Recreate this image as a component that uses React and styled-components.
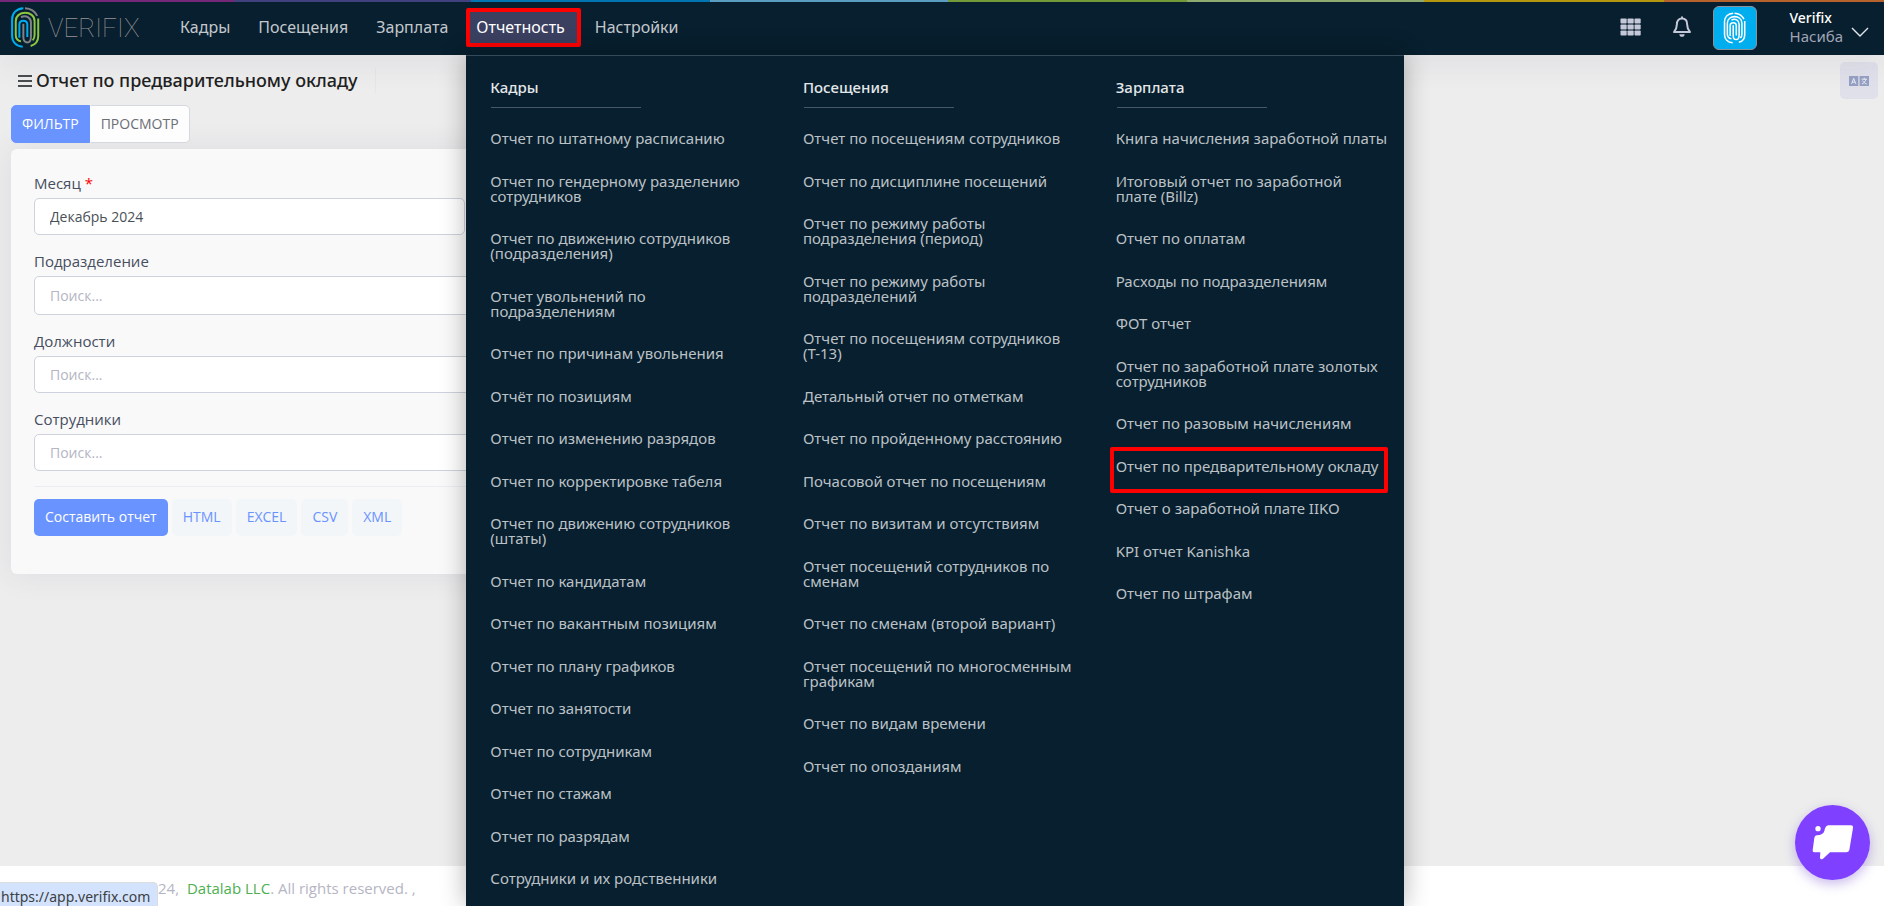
import React, { useState } from 'react';
import styled, { createGlobalStyle } from 'styled-components';

const GlobalStyle = createGlobalStyle`
  *, *::before, *::after {
    box-sizing: border-box;
  }

  body {
    margin: 0;
    background: #ededed;
    color: #3f4254;
    font-family: 'Noto Sans', 'Open Sans', sans-serif;
    font-size: 14px;
    overflow: hidden;
  }

  button, input {
    font-family: inherit;
  }

  ul {
    list-style: none;
    margin: 0;
    padding: 0;
  }
`;

const Page = styled.div`
  display: flex;
  flex-direction: column;
  min-height: 100vh;
`;

/* ---------- header ---------- */

const Header = styled.header`
  position: relative;
  z-index: 2;
  display: flex;
  align-items: stretch;
  height: 55px;
  background: #071f2e;
  box-shadow: 0 10px 30px rgba(82, 63, 105, 0.08);
`;

const Stripes = styled.div`
  position: absolute;
  top: 0;
  left: 0;
  right: 0;
  height: 2px;
  background: linear-gradient(
    to right,
    #762777 0 12.4%,
    #41427d 12.4% 25%,
    #0075b2 25% 37.7%,
    #5b9dc0 37.7% 50.3%,
    #739a38 50.3% 63%,
    #8fab70 63% 75.6%,
    #b4960f 75.6% 88.3%,
    #b5622c 88.3%
  );
`;

const Logo = styled.a`
  display: flex;
  align-items: center;
  gap: 8px;
  width: 170px;
  padding-left: 10px;
  color: #9a9396;
  font-family: Roboto, sans-serif;
  font-size: 26px;
  font-weight: 100;
  line-height: 40px;
  text-decoration: none;
`;

const Nav = styled.nav`
  display: flex;
`;

const NavList = styled.ul`
  display: flex;
  gap: 8px;
`;

const NavItem = styled.li`
  position: relative;
  display: flex;
  align-items: flex-start;
  padding-top: 12px;
`;

const NavButton = styled.button`
  position: relative;
  height: 31px;
  padding: 0 ${props => (props.$active ? 12 : 10)}px 0 10px;
  border: 0;
  background: ${props => (props.$active ? '#3b4061' : 'transparent')};
  color: ${props => (props.$active ? '#ffffff' : '#c4c8cd')};
  font-size: 16px;
  line-height: 29px;
  cursor: pointer;

  &::after {
    content: '';
    display: ${props => (props.$active ? 'block' : 'none')};
    position: absolute;
    inset: -4px -4px -4px 0;
    border: 4px solid #ff0000;
    border-radius: 2px;
  }
`;

const UserBar = styled.div`
  display: flex;
  align-items: center;
  margin-left: auto;
  padding-right: 15px;
`;

const IconButton = styled.button`
  display: flex;
  padding: 0 0 2px;
  border: 0;
  background: none;
  color: #c5c8d8;
  margin-right: ${props => props.$space || 0}px;
  cursor: pointer;
`;

const ProfileButton = styled(IconButton)`
  padding: 8px 0 0;
`;

const Avatar = styled.div`
  display: flex;
  align-items: center;
  justify-content: center;
  width: 44px;
  height: 44px;
  margin-right: 33px;
  border: 1px solid #8a939c;
  border-radius: 6px;
  background: #00aeef;
`;

const UserName = styled.div`
  display: flex;
  flex-direction: column;
  margin-right: 8px;
  padding-bottom: 2px;
  color: #a1a4b5;
  font-size: 15px;
  line-height: 19px;

  strong {
    color: #ffffff;
    font-size: 14px;
    font-weight: 500;
  }
`;

/* ---------- mega menu ---------- */

const MegaMenu = styled.div`
  position: absolute;
  top: 100%;
  left: 0;
  display: grid;
  grid-template-columns: repeat(3, 1fr);
  width: 938px;
  min-height: calc(100vh - 55px);
  padding-top: 20px;
  border-top: 1px solid #34495a;
  background: #071f2e;
  box-shadow: 0 0 24px rgba(0, 0, 0, 0.3);
`;

const MenuColumn = styled.section`
  padding: 0 12px 0 24px;
`;

const MenuTitle = styled.h3`
  margin: 0;
  color: #e4e7ea;
  font-size: 15px;
  font-weight: 500;
  line-height: 22px;

  &::after {
    content: '';
    display: block;
    width: 150px;
    height: 1px;
    margin: 9px 0 9px 1px;
    background: #44586a;
  }
`;

const MenuItem = styled.li`
  padding: 14px 0 13px;
  font-size: 15px;
  line-height: 15px;

  &:nth-child(odd) {
    padding-bottom: 14px;
  }
`;

const MenuLink = styled.a`
  position: relative;
  display: block;
  color: #bcc1c6;
  text-decoration: none;

  &:hover {
    color: #ffffff;
  }

  &::after {
    content: '';
    display: ${props => (props.$marked ? 'block' : 'none')};
    position: absolute;
    inset: -12px 4px -19px -6px;
    border: 4px solid #ff0000;
    border-radius: 2px;
  }
`;

/* ---------- content ---------- */

const Main = styled.main`
  flex: 1;
  padding: 7px 11px 0;
`;

const TitleRow = styled.div`
  display: flex;
  justify-content: space-between;
  align-items: flex-start;
  height: 43px;
`;

const TitleGroup = styled.div`
  display: flex;
  align-items: center;
  height: 37px;
  padding-left: 7px;
`;

const PageTitle = styled.h1`
  margin: 0 0 0 4px;
  padding-right: 17px;
  border-right: 1px solid #e4e6ea;
  color: #212121;
  font-size: 18px;
  font-weight: 500;
  line-height: 25px;
`;

const LangButton = styled.button`
  display: flex;
  align-items: center;
  justify-content: center;
  width: 38px;
  height: 37px;
  margin-right: -5px;
  padding: 0;
  border: 0;
  border-radius: 5px;
  background: #dfe0ea;
`;

const Tabs = styled.div`
  display: flex;
`;

const Tab = styled.button`
  height: 38px;
  padding: 0 10px 2px;
  border: 1px solid ${props => (props.$active ? '#6993ff' : '#d5d8e0')};
  border-left-color: ${props => (props.$active ? '#6993ff' : 'transparent')};
  border-radius: ${props => (props.$active ? '5px 0 0 5px' : '0 5px 5px 0')};
  background: ${props => (props.$active ? '#6993ff' : '#fdfdfd')};
  color: ${props => (props.$active ? '#ffffff' : '#6c6e76')};
  font-size: 14px;
  font-family: 'Open Sans', sans-serif;
  cursor: pointer;
`;

const Card = styled.form`
  width: 50%;
  margin-top: 6px;
  padding: 23px 23px 38px;
  border-radius: 6px;
  background: #f9f9f9;
  box-shadow: 0 0 30px rgba(82, 63, 105, 0.1);
`;

const Field = styled.div`
  width: ${props => (props.$half ? 'calc(50% - 12px)' : '100%')};
  margin-bottom: 15px;
`;

const Label = styled.label`
  display: block;
  padding-bottom: 4px;
  color: #464e5f;
  font-family: 'Open Sans', sans-serif;
  font-size: 15px;
  line-height: 22px;

  span {
    color: #ff0000;
  }
`;

const Input = styled.input`
  display: block;
  width: 100%;
  height: ${props => (props.$tall ? 39 : 37)}px;
  padding: 0 15px;
  border: 1px solid #cdd2dc;
  border-radius: 5px;
  background: #ffffff;
  color: #495057;
  font-family: 'Open Sans', sans-serif;
  font-size: 14px;
  outline: none;

  &::placeholder {
    color: #b5b5c3;
  }
`;

const Actions = styled.div`
  display: flex;
  gap: 4px;
  padding-top: 12px;
  border-top: 1px solid #ebedf3;
`;

const Button = styled.button`
  height: 37px;
  padding: 0 11px 2px;
  border: 0;
  border-radius: 5px;
  background: ${props => (props.$primary ? '#6993ff' : '#f3f6f9')};
  color: ${props => (props.$primary ? '#ffffff' : '#6993ff')};
  font-family: 'Open Sans', sans-serif;
  font-size: 14px;
  cursor: pointer;
`;

const Footer = styled.footer`
  height: 40px;
  padding: 11px 0 0 158px;
  background: #ffffff;
  color: #b5b5c3;
  font-family: 'Open Sans', sans-serif;
  font-size: 15px;
  line-height: 22px;

  a {
    margin-left: 4px;
    color: #4caf50;
    text-decoration: none;
  }
`;

const StatusBubble = styled.div`
  position: fixed;
  z-index: 3;
  left: 0;
  bottom: 0;
  height: 24px;
  padding: 0 7px 0 1px;
  border-top: 1px solid #dcdcdc;
  border-right: 1px solid #dcdcdc;
  border-radius: 0 5px 0 0;
  background: #d3e3fd;
  color: #3c4043;
  font-size: 14px;
  line-height: 28px;
`;

const ChatButton = styled.button`
  position: fixed;
  z-index: 3;
  right: 14px;
  bottom: 26px;
  width: 75px;
  height: 75px;
  padding: 0;
  border: 0;
  border-radius: 50%;
  background: #7f40ff;
  box-shadow: 0 4px 12px rgba(100, 60, 200, 0.35);
  cursor: pointer;
`;

const menu = [
  {
    title: 'Кадры',
    items: [
      'Отчет по штатному расписанию',
      'Отчет по гендерному разделению сотрудников',
      'Отчет по движению сотрудников (подразделения)',
      'Отчет увольнений по подразделениям',
      'Отчет по причинам увольнения',
      'Отчёт по позициям',
      'Отчет по изменению разрядов',
      'Отчет по корректировке табеля',
      'Отчет по движению сотрудников (штаты)',
      'Отчет по кандидатам',
      'Отчет по вакантным позициям',
      'Отчет по плану графиков',
      'Отчет по занятости',
      'Отчет по сотрудникам',
      'Отчет по стажам',
      'Отчет по разрядам',
      'Сотрудники и их родственники',
    ],
  },
  {
    title: 'Посещения',
    items: [
      'Отчет по посещениям сотрудников',
      'Отчет по дисциплине посещений',
      'Отчет по режиму работы подразделения (период)',
      'Отчет по режиму работы подразделений',
      'Отчет по посещениям сотрудников (T-13)',
      'Детальный отчет по отметкам',
      'Отчет по пройденному расстоянию',
      'Почасовой отчет по посещениям',
      'Отчет по визитам и отсутствиям',
      'Отчет посещений сотрудников по сменам',
      'Отчет по сменам (второй вариант)',
      'Отчет посещений по многосменным графикам',
      'Отчет по видам времени',
      'Отчет по опозданиям',
    ],
  },
  {
    title: 'Зарплата',
    items: [
      'Книга начисления заработной платы',
      'Итоговый отчет по заработной плате\u00a0(Billz)',
      'Отчет по оплатам',
      'Расходы по подразделениям',
      'ФОТ отчет',
      'Отчет по заработной плате золотых сотрудников',
      'Отчет по разовым начислениям',
      'Отчет по предварительному окладу',
      'Отчет о заработной плате IIKO',
      'KPI отчет Kanishka',
      'Отчет по штрафам',
    ],
  },
];

const sections = ['Кадры', 'Посещения', 'Зарплата', 'Отчетность', 'Настройки'];
const formats = ['HTML', 'EXCEL', 'CSV', 'XML'];
const currentReport = 'Отчет по предварительному окладу';

function Fingerprint({ width, height, blue = '#00aeef', green = '#8cc63f', gray = '#808285' }) {
  return (
    <svg width={width} height={height} viewBox="30 19 90 124" fill="none" strokeWidth="6" aria-hidden="true">
      <path d="M70 23C49 24 36 38 36 56V107C36 124 48 138 68 139" stroke={blue} />
      <path d="M75 23C92 24 105 32 112 46" stroke={gray} />
      <path d="M115 54V107C115 122 107 133 92 137" stroke={green} />
      <path d="M63 123C52 121 47 114 47 104V62C47 28 104 28 104 62V104C104 111 102 116 98 120" stroke={green} />
      <path d="M63 50C78 42 93 51 93 66V108C93 133 70 131 70 110V70" stroke={gray} />
      <path d="M58 112V72C58 57 82 57 82 72V110" stroke={blue} />
    </svg>
  );
}

function GridIcon() {
  return (
    <svg width="22" height="18" viewBox="0 0 22 18" fill="currentColor" aria-hidden="true">
      {[0, 6, 12].map(y => [0, 7, 14].map(x => (
        <rect key={`${x}-${y}`} x={x + 0.5} y={y + 0.4} width="6.2" height="5.2" rx="0.8" />
      )))}
    </svg>
  );
}

function BellIcon() {
  return (
    <svg width="20" height="22" viewBox="0 0 20 22" aria-hidden="true">
      <path
        d="M10 2.6C6.6 2.6 4.9 5 4.9 8.2C4.9 12.2 3.9 13.6 2 16H18C16.1 13.6 15.1 12.2 15.1 8.2C15.1 5 13.4 2.6 10 2.6Z"
        fill="none"
        stroke="currentColor"
        strokeWidth="2"
        strokeLinejoin="round"
      />
      <path d="M10 0.5V3" stroke="currentColor" strokeWidth="2" />
      <path d="M7.3 18.2H12.7C12.6 19.8 11.5 20.8 10 20.8C8.5 20.8 7.4 19.8 7.3 18.2Z" fill="currentColor" />
    </svg>
  );
}

function LangIcon() {
  return (
    <svg width="20" height="10" viewBox="0 0 20 10" aria-hidden="true">
      <path d="M0 0H9.3V10H0ZM10.6 0H20V10H10.6Z" fill="#96a0c3" />
      <path
        d="M2.6 7.8L4.7 2.4L6.8 7.8M3.4 6.2H6M12.6 3.2H18M15.3 1.8V3.2M17 3.2C16.5 5.4 15 7 12.9 8M13.7 4.6C14.4 6.2 15.9 7.4 17.7 8"
        fill="none"
        stroke="#eceef6"
        strokeWidth="1"
      />
    </svg>
  );
}

export default function App() {
  const [tab, setTab] = useState('filter');
  const [month, setMonth] = useState('Декабрь 2024');

  return (
    <Page>
      <GlobalStyle />
      <Header>
        <Stripes />
        <Logo href="#">
          <Fingerprint width={30} height={41} />
          VERIFIX
        </Logo>
        <Nav>
          <NavList>
            {sections.map(name => (
              <NavItem key={name}>
                <NavButton type="button" $active={name === 'Отчетность'}>{name}</NavButton>
                {name === 'Отчетность' && (
                  <MegaMenu>
                    {menu.map(column => (
                      <MenuColumn key={column.title}>
                        <MenuTitle>{column.title}</MenuTitle>
                        <ul>
                          {column.items.map(item => (
                            <MenuItem key={item}>
                              <MenuLink href="#" $marked={item === currentReport}>{item}</MenuLink>
                            </MenuItem>
                          ))}
                        </ul>
                      </MenuColumn>
                    ))}
                  </MegaMenu>
                )}
              </NavItem>
            ))}
          </NavList>
        </Nav>
        <UserBar>
          <IconButton type="button" aria-label="Приложения" $space={30}>
            <GridIcon />
          </IconButton>
          <IconButton type="button" aria-label="Уведомления" $space={21}>
            <BellIcon />
          </IconButton>
          <Avatar>
            <Fingerprint width={23} height={32} blue="#ffffff" green="#ffffff" gray="#ffffff" />
          </Avatar>
          <UserName>
            <strong>Verifix</strong>
            Насиба
          </UserName>
          <ProfileButton type="button" aria-label="Профиль">
            <svg width="18" height="10" viewBox="0 0 18 10" fill="none" stroke="#e4e6ef" strokeWidth="1.4">
              <path d="M1 1L9 9L17 1" />
            </svg>
          </ProfileButton>
        </UserBar>
      </Header>

      <Main>
        <TitleRow>
          <TitleGroup>
            <svg width="14" height="12" viewBox="0 0 14 12" stroke="#4a4d4f" strokeWidth="2" aria-hidden="true">
              <path d="M0 1H14M0 6H14M0 11H14" />
            </svg>
            <PageTitle>Отчет по предварительному окладу</PageTitle>
          </TitleGroup>
          <LangButton type="button" aria-label="Язык">
            <LangIcon />
          </LangButton>
        </TitleRow>

        <Tabs>
          <Tab type="button" $active={tab === 'filter'} onClick={() => setTab('filter')}>ФИЛЬТР</Tab>
          <Tab type="button" $active={tab === 'view'} onClick={() => setTab('view')}>ПРОСМОТР</Tab>
        </Tabs>

        <Card onSubmit={e => e.preventDefault()}>
          <Field $half>
            <Label htmlFor="month">Месяц <span>*</span></Label>
            <Input id="month" value={month} onChange={e => setMonth(e.target.value)} />
          </Field>
          <Field>
            <Label htmlFor="division">Подразделение</Label>
            <Input id="division" placeholder="Поиск..." $tall />
          </Field>
          <Field>
            <Label htmlFor="job">Должности</Label>
            <Input id="job" placeholder="Поиск..." />
          </Field>
          <Field>
            <Label htmlFor="staff">Сотрудники</Label>
            <Input id="staff" placeholder="Поиск..." />
          </Field>
          <Actions>
            <Button type="submit" $primary>Составить отчет</Button>
            {formats.map(format => (
              <Button key={format} type="button">{format}</Button>
            ))}
          </Actions>
        </Card>
      </Main>

      <Footer>
        24, <a href="#">Datalab LLC</a>. All rights reserved. ,
      </Footer>

      <StatusBubble>https://app.verifix.com</StatusBubble>
      <ChatButton type="button" aria-label="Чат">
        <svg width="75" height="75" viewBox="0 0 225 225" fill="#ffffff">
          <circle cx="69" cy="71" r="8" />
          <path d="M100 61H168Q175 61 174 69L163 135Q161 142 154 142H105L84 161Q76 166 75 158L76 142H58Q52 142 53 136L58 98Q59 92 65 91Q85 90 88 78Q91 62 100 61Z" />
        </svg>
      </ChatButton>
    </Page>
  );
}
